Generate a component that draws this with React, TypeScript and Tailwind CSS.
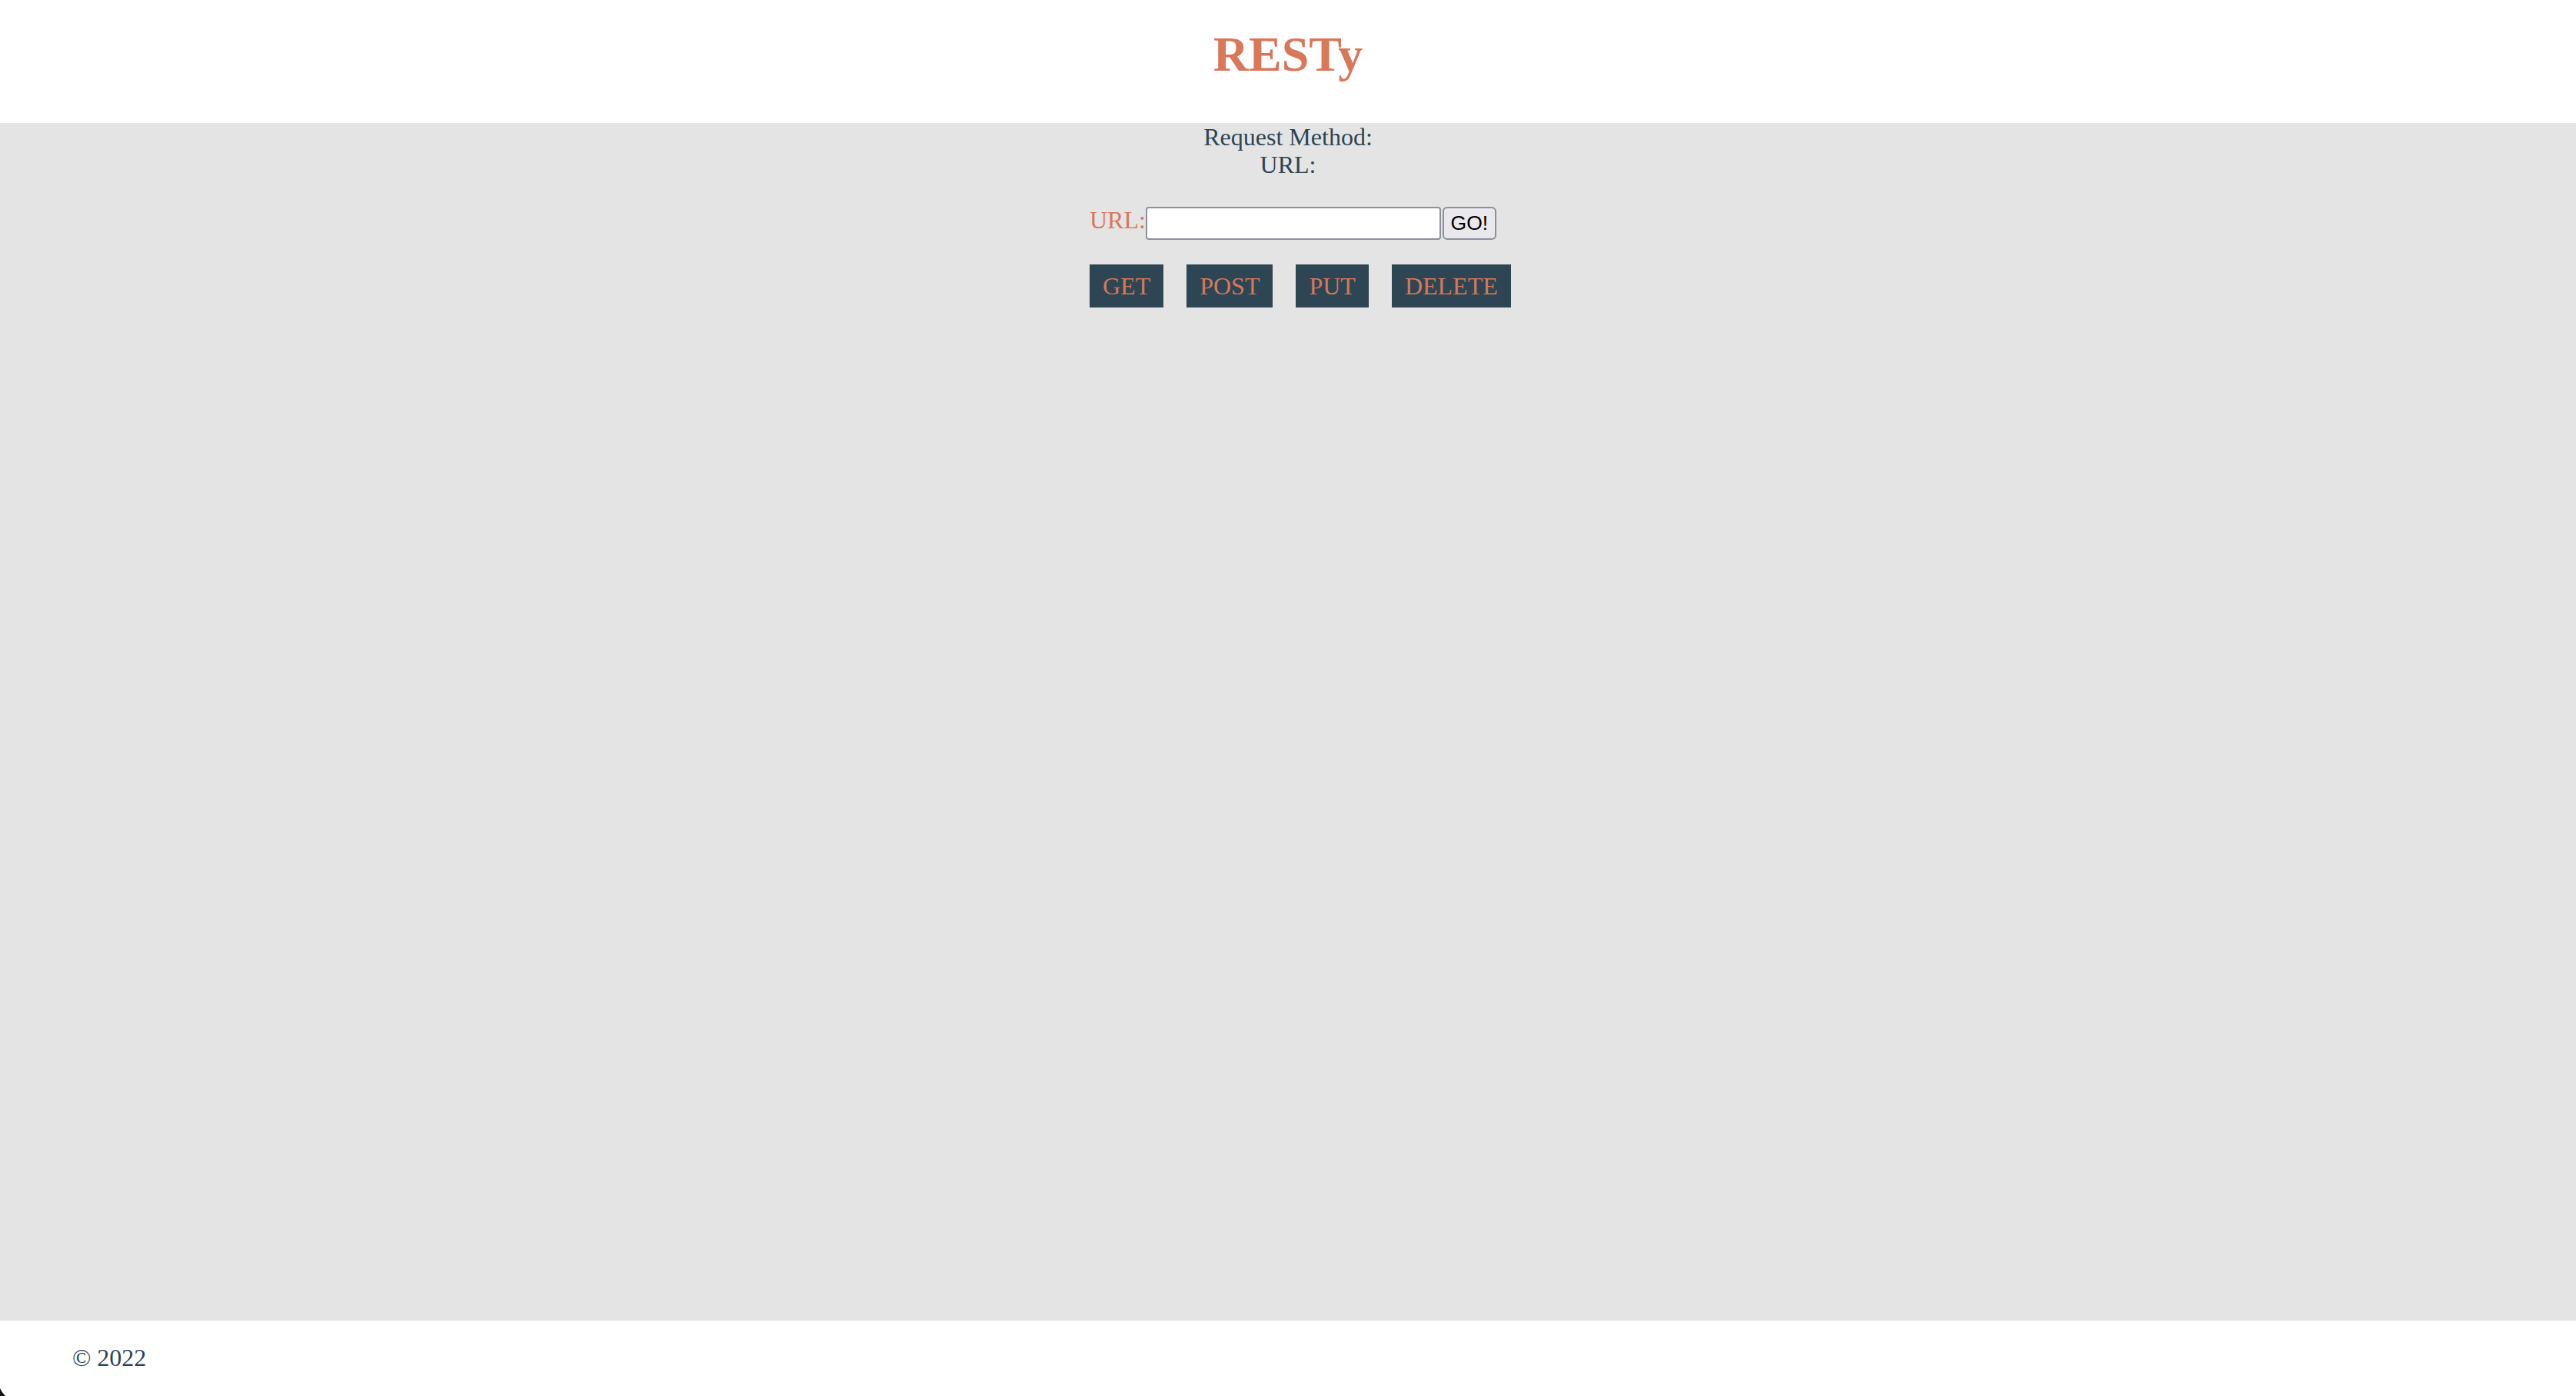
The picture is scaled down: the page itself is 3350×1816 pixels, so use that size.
import React, { useState } from "react";

const methods = ["GET", "POST", "PUT", "DELETE"];

export default function App() {
  const [method, setMethod] = useState("");
  const [url, setUrl] = useState("");
  const [draft, setDraft] = useState("");

  const handleSubmit = (e: React.FormEvent<HTMLFormElement>) => {
    e.preventDefault();
    setUrl(draft);
  };

  return (
    <div className="relative flex h-screen flex-col bg-white font-['Liberation_Serif',serif] text-[32px] text-[#2d4553]">
      <header className="h-[160px] shrink-0 pt-[35px] text-center">
        <h1 className="text-[64px] font-bold leading-[71px] text-[#d9775a]">RESTy</h1>
      </header>

      <main className="flex-1 bg-[#e4e4e4]">
        <div className="text-center leading-[36px]">
          <div>Request Method: {method}</div>
          <div>URL: {url}</div>
        </div>

        <form onSubmit={handleSubmit} className="mx-auto mt-[36px] w-[516px]">
          <div className="flex w-max items-start">
            <label className="leading-[36px] text-[#d9775a]">URL:</label>
            <input
              type="text"
              value={draft}
              onChange={e => setDraft(e.target.value)}
              className="mt-[1px] h-[43px] w-[384px] rounded-[4px] border-2 border-[#8f8f9d] bg-white px-2 font-['Liberation_Sans',sans-serif] text-[26px] text-black outline-none"
            />
            <button
              type="submit"
              className="ml-[2px] mt-[1px] h-[43px] w-[70px] rounded-[6px] border-2 border-[#8f8f9d] bg-[#e9e9ed] font-['Liberation_Sans',sans-serif] text-[26.5px] leading-none text-black"
            >
              GO!
            </button>
          </div>

          <div className="mt-[32px] flex w-max gap-[30px]">
            {methods.map(m => (
              <button
                key={m}
                type="button"
                onClick={() => setMethod(m)}
                className="bg-[#2e4653] px-[17px] py-[10px] leading-[36px] text-[#d9775a]"
              >
                {m}
              </button>
            ))}
          </div>
        </form>
      </main>

      <footer className="h-[98px] shrink-0 pl-[94px] pt-[30px] leading-[36px]">
        &copy; 2022
      </footer>

      <svg className="absolute bottom-0 left-0" width="8" height="10" viewBox="0 0 8 10">
        <path d="M0 0 Q2 5 7 10 L0 10 Z" fill="#111" />
      </svg>
    </div>
  );
}
